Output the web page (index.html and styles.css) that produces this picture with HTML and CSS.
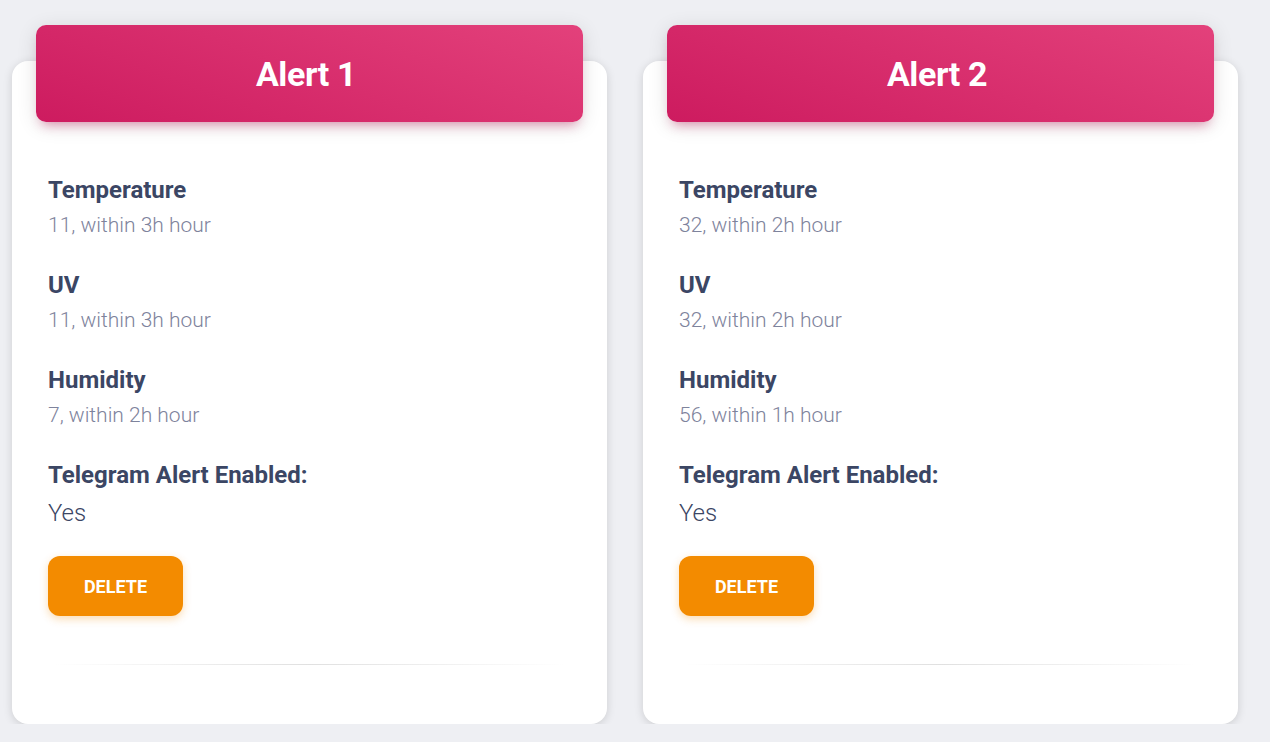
FILE: index.html
```html
<!DOCTYPE html>
<html>
<head>
<meta charset="utf-8">
<link rel="stylesheet" href="styles.css">
</head>
<body>
<div class="grid">
  <div class="card">
    <div class="card-header"><h3>Alert 1</h3></div>
    <div class="card-body">
      <div class="item"><div class="label">Temperature</div><div class="value">11, within 3h hour</div></div>
      <div class="item"><div class="label">UV</div><div class="value">11, within 3h hour</div></div>
      <div class="item"><div class="label">Humidity</div><div class="value">7, within 2h hour</div></div>
      <div class="item"><div class="label">Telegram Alert Enabled:</div><div class="yes">Yes</div></div>
      <button class="btn">DELETE</button>
    </div>
    <div class="divider"></div>
  </div>
  <div class="card">
    <div class="card-header"><h3>Alert 2</h3></div>
    <div class="card-body">
      <div class="item"><div class="label">Temperature</div><div class="value">32, within 2h hour</div></div>
      <div class="item"><div class="label">UV</div><div class="value">32, within 2h hour</div></div>
      <div class="item"><div class="label">Humidity</div><div class="value">56, within 1h hour</div></div>
      <div class="item"><div class="label">Telegram Alert Enabled:</div><div class="yes">Yes</div></div>
      <button class="btn">DELETE</button>
    </div>
    <div class="divider"></div>
  </div>
</div>
</body>
</html>
```
FILE: styles.css
```css
html, body {
  margin: 0;
  padding: 0;
  background: #eeeff3;
  font-family: Roboto, "Liberation Sans", sans-serif;
}
.grid {
  display: flex;
  gap: 36px;
  padding: 61px 0 0 12px;
}
.card {
  width: 595px;
  height: 663px;
  background: #fff;
  border-radius: 16px;
  box-shadow: 0 2px 10px rgba(0, 0, 0, 0.14);
  display: flex;
  flex-direction: column;
}
.card-header {
  margin: -36px 24px 0;
  height: 97px;
  padding-right: 7px;
  border-radius: 10px;
  background: linear-gradient(200deg, #e3417b 0%, #cd1b5f 100%);
  box-shadow: 0 4px 20px rgba(0, 0, 0, 0.12), 0 8px 12px -6px rgba(216, 27, 96, 0.45);
  display: flex;
  align-items: center;
  justify-content: center;
}
.card-header h3 {
  margin: 0;
  color: #fff;
  font-size: 34px;
  font-weight: 700;
  letter-spacing: -0.4px;
}
.card-body {
  padding: 51px 36px 0;
}
.item {
  margin-bottom: 25px;
}
.label {
  font-size: 24px;
  font-weight: 700;
  line-height: 34px;
  color: #3b4664;
}
.value {
  font-size: 21px;
  font-weight: 300;
  line-height: 36px;
  color: #7e839c;
}
.yes {
  font-size: 24px;
  font-weight: 300;
  line-height: 42px;
  color: #3b4664;
}
.item:nth-of-type(4) {
  margin-bottom: 22px;
}
.btn {
  display: block;
  width: 135px;
  height: 60px;
  border: none;
  border-radius: 12px;
  background: #f38b00;
  color: #fff;
  font-family: Roboto, "Liberation Sans", sans-serif;
  font-weight: 700;
  font-size: 18px;
  box-shadow: 0 3px 8px rgba(243, 139, 0, 0.3);
  padding: 0;
}
.divider {
  height: 1px;
  margin: 48px 40px 0;
  background: linear-gradient(to right, rgba(0, 0, 0, 0), rgba(0, 0, 0, 0.12), rgba(0, 0, 0, 0));
}
```
